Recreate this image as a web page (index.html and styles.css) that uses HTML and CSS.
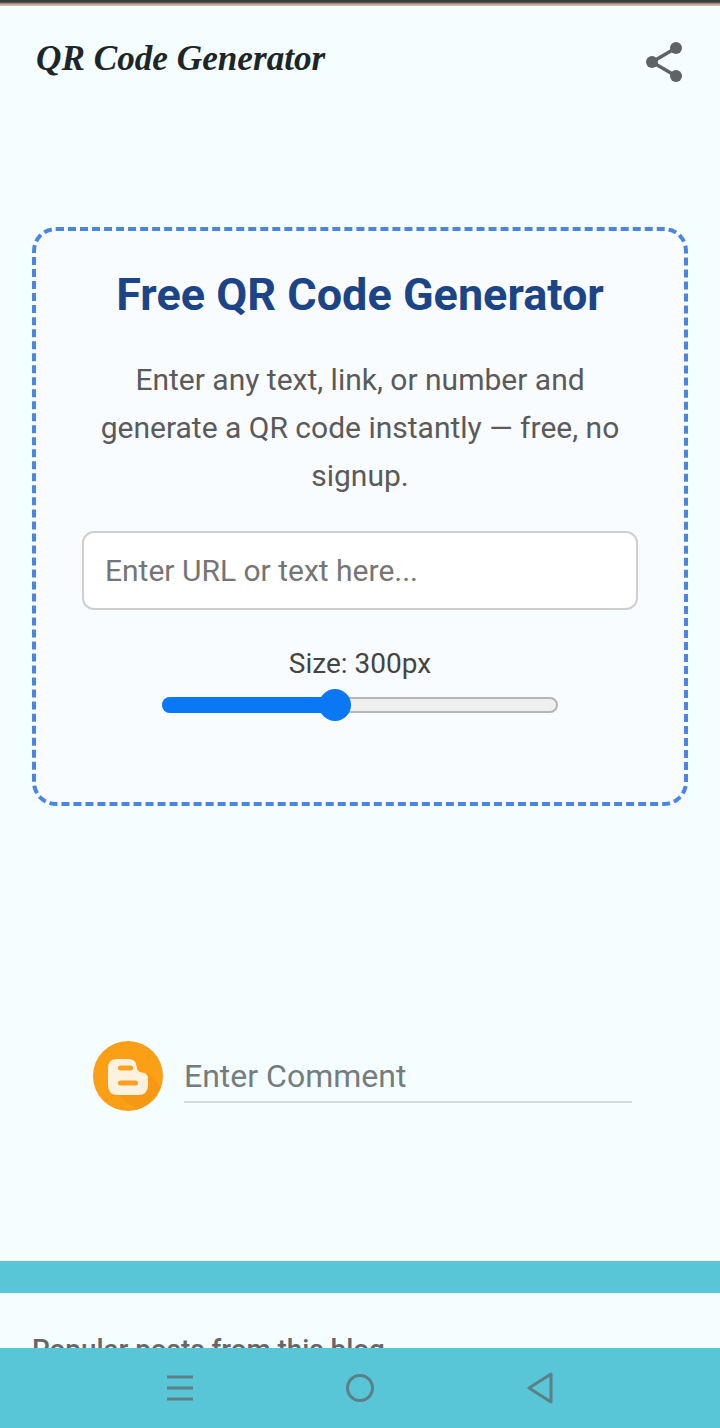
FILE: index.html
```html
<!DOCTYPE html>
<html lang="en">
<head>
<meta charset="utf-8">
<title>QR Code Generator</title>
<link rel="stylesheet" href="styles.css">
</head>
<body>
<div class="status-strip"></div>
<header class="site-header">
  <h1 class="site-title">QR Code Generator</h1>
  <svg class="share" viewBox="0 0 44 44" width="44" height="44" aria-label="Share">
    <path class="share-line" d="M34 11 L10 25 L34 39"/>
    <circle class="share-dot" cx="34" cy="11" r="6"/>
    <circle class="share-dot" cx="10" cy="25" r="6"/>
    <circle class="share-dot" cx="34" cy="39" r="6"/>
  </svg>
</header>
<main class="content">
  <section class="card">
    <h2 class="card-title">Free QR Code Generator</h2>
    <p class="card-text">Enter any text, link, or number and generate a QR code instantly — free, no signup.</p>
    <input class="url-input" type="text" placeholder="Enter URL or text here...">
    <div class="size-label">Size: 300px</div>
    <div class="slider">
      <div class="slider-fill"></div>
      <div class="slider-thumb"></div>
    </div>
  </section>
  <section class="comment">
    <svg class="blogger" viewBox="0 0 70 70" width="70" height="70" aria-hidden="true">
      <circle cx="35" cy="35" r="35" fill="#fb9f17"/>
      <path class="b-shadow" d="M24 54 H45 Q55 54 55 44 V32 L68 46 Q60 62 44 69 Z"/>
      <path class="b-body" d="M24 18 H35 Q43 18 43.500 25 Q44 31 49 31.500 Q55 32 55 38 V44 Q55 54 45 54 H25 Q15 54 15 44 V27 Q15 18 24 18 Z"/>
      <rect class="b-bar" x="25" y="24.500" width="15" height="5" rx="2.500"/>
      <rect class="b-bar" x="25" y="39.500" width="20" height="5" rx="2.500"/>
    </svg>
    <div class="comment-field">Enter Comment</div>
  </section>
  <div class="divider"></div>
  <h3 class="popular">Popular posts from this blog</h3>
</main>
<nav class="nav-bar">
  <svg class="nav-icon" viewBox="0 0 26 30" width="26" height="30" aria-label="Menu">
    <path d="M0 4 H26 M0 15 H26 M0 26 H26"/>
  </svg>
  <svg class="nav-icon" viewBox="0 0 30 30" width="30" height="30" aria-label="Home">
    <circle cx="15" cy="15" r="12.500"/>
  </svg>
  <svg class="nav-icon" viewBox="0 0 28 32" width="28" height="32" aria-label="Back">
    <path d="M24 2 V30 L2 16 Z"/>
  </svg>
</nav>
</body>
</html>
```
FILE: styles.css
```css
* { box-sizing: border-box; }
html, body { margin: 0; height: 1428px; overflow: hidden; }
body { background: #f4fdff; font-family: Roboto, "Liberation Sans", sans-serif; color: #555; }
.status-strip { height: 6px; background: linear-gradient(#37403e 0 2px, #c39a88 4px, #dcc4b8 6px); }
.site-header { display: flex; justify-content: space-between; align-items: center; height: 106px; padding: 0 36px; }
.site-title { margin: 0; font-family: "Liberation Serif", serif; font-style: italic; font-weight: 700; font-size: 35.200px; color: #1d2626; line-height: 1; }
.share { margin-right: -2px; overflow: visible; }
.share-line { fill: none; stroke: #5d6466; stroke-width: 3.500; }
.share-dot { fill: #5d6466; }
.content { padding: 115px 32px 0; }
.card { height: 579px; border: 4px dashed #4a86e0; border-radius: 24px; background: #f9fcff; padding: 36px 46px 0; text-align: center; }
.card-title { margin: 0; font-size: 45px; line-height: 56px; font-weight: 700; color: #1c4587; }
.card-text { margin: 33px 0 0; font-size: 30px; line-height: 48px; color: #5a5a5a; }
.url-input { display: block; width: 100%; height: 79px; margin-top: 31px; padding: 0 21px; border: 2px solid #cfcfcf; border-radius: 12px; background: #fff; font: 30px Roboto, sans-serif; color: #333; }
.url-input::placeholder { color: #757575; opacity: 1; }
.size-label { margin-top: 36px; font-size: 28px; line-height: 36px; color: #444; }
.slider { position: relative; width: 396px; height: 16px; margin: 15px auto 0; border: 2px solid #b5b5b5; border-radius: 8px; background: #efefef; }
.slider-fill { position: absolute; left: -2px; top: -2px; width: 174px; height: 16px; border-radius: 8px 0 0 8px; background: #0a78f5; }
.slider-thumb { position: absolute; left: 155px; top: -10px; width: 32px; height: 32px; border-radius: 50%; background: #0a78f5; }
.comment { display: flex; align-items: flex-start; gap: 21px; margin: 235px 56px 0 61px; }
.comment-field { flex: 1; height: 62px; padding-top: 17px; border-bottom: 2px solid #d3dcdd; font-size: 32px; line-height: 37px; color: #757c7d; }
.blogger { flex: none; }
.b-body { fill: #fdf2e0; }
.b-bar { fill: #fa9f20; }
.b-shadow { fill: #f2930f; opacity: 0.55; }
.divider { height: 32px; margin: 150px -32px 0; background: #58c6d6; }
.popular { margin: 39px 0 0; font-size: 27.800px; font-weight: 500; line-height: 36px; color: #666; }
.nav-bar { position: fixed; left: 0; right: 0; bottom: 0; height: 80px; display: flex; justify-content: center; align-items: center; gap: 152px; padding-left: 2px; background: #58c6d6; }
.nav-icon { fill: none; stroke: #5c7f88; stroke-width: 3; stroke-linejoin: round; }
```
